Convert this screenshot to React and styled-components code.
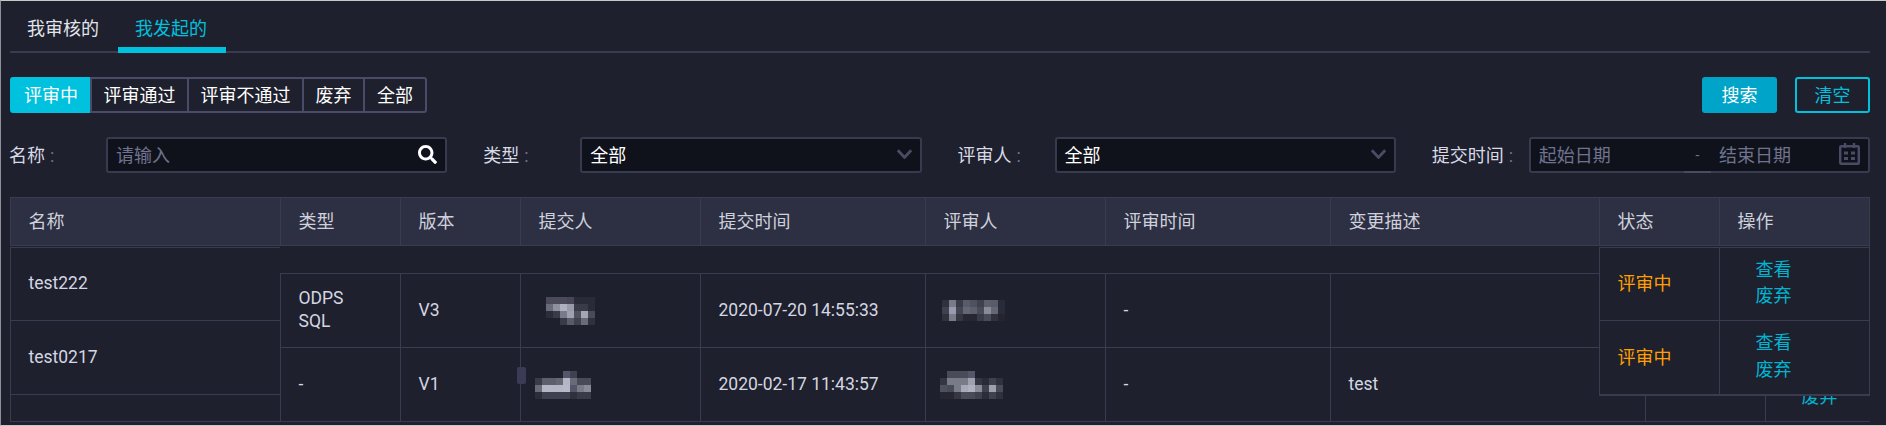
import React from "react";
import styled, { createGlobalStyle } from "styled-components";
import { FaSearch } from "react-icons/fa";

const GlobalStyle = createGlobalStyle`
  html, body {
    margin: 0;
    padding: 0;
    background: #1e202d;
  }
  * {
    box-sizing: border-box;
  }
`;

const COLUMNS = "270px 120px 120px 180px 225px 180px 225px 315px 120px 105px";

const BLOCK = 7;

// blurred user names, one colour per 7px block, null = nothing drawn
const submitterA = [
  ["#4a4a5a", "#4a4a5a", "#4a4a5a", "#464656", "#2a2b38", "#2a2b38", "#2a2b38"],
  ["#6a6b7a", "#8f909f", "#b0b1c0", "#9a9baa", "#3a3b48", "#3a3b48", "#2a2b38"],
  ["#2c2d3a", "#3a3b48", "#7a7b8a", "#a0a1b0", "#50515f", "#a5a6b5", "#4a4b58"],
  [null, null, "#3a3b48", "#5a5b68", "#40414e", "#6a6b78", "#30313c"],
];
const submitterB = [
  [null, null, null, null, "#55566a", "#3f4050", null, null],
  ["#3a3b48", "#5e5f6c", "#5e5f6c", "#666775", "#b5b6c5", "#6a6b78", "#4a4b58", "#4a4b58"],
  ["#6a6b78", "#b5b6c5", "#b5b6c5", "#b5b6c5", "#b8b9c8", "#55566a", "#7a7b88", "#8a8b98"],
  ["#2c2d3a", "#3f4050", "#3f4050", "#3f4050", "#3f4050", "#30313c", "#3a3b48", "#3a3b48"],
];
const reviewerA = [
  ["#30313c", "#7a7b88", "#3a3b48", "#5a5b68", "#50515f", "#40414e", "#5e5f6c", "#5a5b68", "#2a2b38"],
  ["#3f4050", "#9a9bae", "#444552", "#666775", "#5e5f6c", "#4a4b58", "#8a8b98", "#666775", "#2a2b38"],
  ["#30313c", "#7a7b88", "#353642", "#262733", "#262733", "#3a3b48", "#4a4b58", "#30313c", "#23242f"],
];
const reviewerB = [
  [null, "#4a4b58", "#4a4b58", "#4a4b58", "#55566a", null, null, null, null],
  ["#353642", "#7a7b88", "#7a7b88", "#7a7b88", "#a0a1b0", "#353642", "#2a2b38", "#3f4050", "#30313c"],
  ["#50515f", "#4a4b58", "#7a7b88", "#a8a9b8", "#b0b1c0", "#8a8b98", "#40414e", "#a0a1b0", "#4a4b58"],
  ["#262733", "#262733", "#353642", "#4a4b58", "#4a4b58", "#40414e", "#2c2d3a", "#3f4050", "#30313c"],
];

const Mosaic = ({ rows, shift }) => (
  <MosaicSvg
    $shift={shift}
    width={rows[0].length * BLOCK}
    height={rows.length * BLOCK}
    shapeRendering="crispEdges"
  >
    {rows.map((row, y) =>
      row.map((color, x) =>
        color ? (
          <rect key={`${x}-${y}`} x={x * BLOCK} y={y * BLOCK} width={BLOCK} height={BLOCK} fill={color} />
        ) : null
      )
    )}
  </MosaicSvg>
);

const Chevron = () => (
  <svg width="15" height="10" viewBox="0 0 15 10">
    <path d="M0.8 1.2 L7.5 8.4 L14.2 1.2" fill="none" stroke="#4a4c66" strokeWidth="2.8" />
  </svg>
);

const CalendarIcon = () => (
  <svg width="21" height="22" viewBox="0 0 21 22">
    <rect x="1.2" y="3.2" width="18.6" height="17.6" rx="1" fill="none" stroke="#4a4c66" strokeWidth="2.4" />
    <path d="M6 0 V5 M15 0 V5" stroke="#4a4c66" strokeWidth="2.4" />
    <path d="M5 10 H9 M12 10 H16 M5 15.5 H9 M12 15.5 H16" stroke="#4a4c66" strokeWidth="2.8" />
  </svg>
);

const Ops = () => (
  <OpsStack>
    <OpLink>查看</OpLink>
    <OpLink>废弃</OpLink>
  </OpsStack>
);

const App = () => {
  return (
    <Page>
      <GlobalStyle />
      <Tabs>
        <Tab>我审核的</Tab>
        <Tab $active>我发起的</Tab>
      </Tabs>

      <Toolbar>
        <StatusGroup>
          <StatusButton $active>评审中</StatusButton>
          <StatusButton>评审通过</StatusButton>
          <StatusButton>评审不通过</StatusButton>
          <StatusButton>废弃</StatusButton>
          <StatusButton>全部</StatusButton>
        </StatusGroup>
        <Actions>
          <SearchButton>搜索</SearchButton>
          <ClearButton>清空</ClearButton>
        </Actions>
      </Toolbar>

      <Filters>
        <Filter>
          <Label>名称<Colon>:</Colon></Label>
          <Field>
            <Placeholder>请输入</Placeholder>
            <FaSearch size={19} color="#ffffff" />
          </Field>
        </Filter>
        <Filter>
          <Label>类型<Colon>:</Colon></Label>
          <Field>
            <Value>全部</Value>
            <Chevron />
          </Field>
        </Filter>
        <Filter>
          <Label>评审人<Colon>:</Colon></Label>
          <Field>
            <Value>全部</Value>
            <Chevron />
          </Field>
        </Filter>
        <Filter>
          <Label>提交时间<Colon>:</Colon></Label>
          <RangeField>
            <RangeStart>
              <Placeholder>起始日期</Placeholder>
            </RangeStart>
            <RangeDash>-</RangeDash>
            <RangeEnd>
              <Placeholder>结束日期</Placeholder>
              <CalendarIcon />
            </RangeEnd>
          </RangeField>
        </Filter>
      </Filters>

      <TableWrap>
        <HeadRow $columns={COLUMNS}>
          <HeadCell>名称</HeadCell>
          <HeadCell>类型</HeadCell>
          <HeadCell>版本</HeadCell>
          <HeadCell>提交人</HeadCell>
          <HeadCell>提交时间</HeadCell>
          <HeadCell>评审人</HeadCell>
          <HeadCell>评审时间</HeadCell>
          <HeadCell>变更描述</HeadCell>
          <HeadCell>状态</HeadCell>
          <HeadCell>操作</HeadCell>
        </HeadRow>
        <SpacerRow />
        <BodyRow $columns={COLUMNS}>
          <Cell>test222</Cell>
          <Cell><TypeText>ODPS SQL</TypeText></Cell>
          <Cell>V3</Cell>
          <Cell><Mosaic rows={submitterA} shift={7} /></Cell>
          <Cell>2020-07-20 14:55:33</Cell>
          <Cell><Mosaic rows={reviewerA} shift={-2} /></Cell>
          <Cell>-</Cell>
          <Cell />
          <Cell><Status>评审中</Status></Cell>
          <Cell><Ops /></Cell>
        </BodyRow>
        <BodyRow $columns={COLUMNS}>
          <Cell>test0217</Cell>
          <Cell>-</Cell>
          <Cell>V1</Cell>
          <Cell>
            <ScrollThumb />
            <Mosaic rows={submitterB} shift={-4} />
          </Cell>
          <Cell>2020-02-17 11:43:57</Cell>
          <Cell><Mosaic rows={reviewerB} shift={-4} /></Cell>
          <Cell>-</Cell>
          <Cell>test</Cell>
          <Cell><Status>评审中</Status></Cell>
          <Cell><Ops /></Cell>
        </BodyRow>

        <FixedLeft>
          <HeadRow $columns="270px">
            <HeadCell>名称</HeadCell>
          </HeadRow>
          <FixedBody>
            <FixedRow $columns="270px"><Cell>test222</Cell></FixedRow>
            <FixedRow $columns="270px"><Cell>test0217</Cell></FixedRow>
            <LeftFiller />
          </FixedBody>
        </FixedLeft>

        <FixedRight>
          <HeadRow $columns="120px 150px">
            <HeadCell>状态</HeadCell>
            <HeadCell>操作</HeadCell>
          </HeadRow>
          <FixedBody>
            <FixedRow $columns="120px 150px">
              <Cell><Status>评审中</Status></Cell>
              <Cell><Ops /></Cell>
            </FixedRow>
            <FixedRow $columns="120px 150px">
              <Cell><Status>评审中</Status></Cell>
              <Cell><Ops /></Cell>
            </FixedRow>
          </FixedBody>
        </FixedRight>
      </TableWrap>
    </Page>
  );
};

export default App;

const Page = styled.div`
  width: 1886px;
  height: 426px;
  overflow: hidden;
  padding: 0 16px 0 9px;
  background: #1e202d;
  border-top: 1px solid #c8c8c8;
  border-left: 1px solid #8f909a;
  border-bottom: 1px solid #c8c8c8;
  color: #d8dae5;
  font-family: Roboto, "Noto Sans CJK SC", sans-serif;
  font-size: 17.5px;
`;

const Tabs = styled.div`
  display: flex;
  height: 52px;
  border-bottom: 2px solid #3a3b50;
`;

const Tab = styled.div`
  height: 52px;
  width: 108px;
  padding: 15px 2px 0 0;
  line-height: 26px;
  text-align: center;
  font-size: 18px;
  color: ${({ $active }) => ($active ? "#00c1de" : "#e2e4ec")};
  border-bottom: 6px solid ${({ $active }) => ($active ? "#00c1de" : "transparent")};
`;

const Toolbar = styled.div`
  display: flex;
  justify-content: space-between;
  margin-top: 24px;
`;

const StatusGroup = styled.div`
  display: flex;
  height: 36px;
`;

const StatusButton = styled.div`
  display: flex;
  align-items: center;
  padding: 0 11.5px 2px;
  margin-left: -2px;
  font-size: 18px;
  color: #ffffff;
  background: ${({ $active }) => ($active ? "#00c1de" : "transparent")};
  border: 2px solid ${({ $active }) => ($active ? "#00c1de" : "#4a4b68")};

  &:first-child {
    margin-left: 0;
    border-radius: 3px 0 0 3px;
    padding: 0 12px 2px;
  }
  &:last-child {
    border-radius: 0 3px 3px 0;
    padding: 0 12px 2px;
  }
`;

const Actions = styled.div`
  display: flex;
  gap: 18px;
`;

const SearchButton = styled.div`
  width: 75px;
  height: 36px;
  display: flex;
  align-items: center;
  justify-content: center;
  padding-bottom: 2px;
  font-size: 18px;
  color: #ffffff;
  background: #00a4c8;
  border-radius: 3px;
`;

const ClearButton = styled(SearchButton)`
  color: #00c1de;
  background: transparent;
  border: 2px solid #00c1de;
`;

const Filters = styled.div`
  display: grid;
  grid-template-columns: repeat(4, 1fr);
  column-gap: 37px;
  margin-top: 24px;
`;

const Filter = styled.div`
  display: flex;
  align-items: center;
`;

const Label = styled.div`
  width: 96px;
  flex-shrink: 0;
  margin-left: -1px;
  margin-right: 1px;
  padding-bottom: 2px;
  font-size: 18px;
  color: #d8dae5;
  white-space: nowrap;
`;

const Colon = styled.span`
  margin-left: 5px;
  color: #6f7390;
`;

const Field = styled.div`
  flex: 1;
  height: 36px;
  display: flex;
  align-items: center;
  justify-content: space-between;
  padding: 0 8px 2px 8px;
  background: #10121b;
  border: 2px solid #383a50;
  border-radius: 3px;
`;

const Placeholder = styled.span`
  font-size: 18px;
  color: #6f7390;
`;

const Value = styled.span`
  font-size: 18px;
  color: #ffffff;
`;

const RangeField = styled.div`
  flex: 1;
  height: 36px;
  display: flex;
  background: #10121b;
  border: 2px solid #383a50;
  border-radius: 3px;
`;

const RangeStart = styled.div`
  flex: 1;
  display: flex;
  align-items: center;
  padding: 0 0 2px 8px;
`;

const RangeDash = styled.div`
  width: 27px;
  display: flex;
  align-items: center;
  justify-content: center;
  font-size: 14px;
  color: #6f7390;
  margin-bottom: -2px;
  border-bottom: 2px solid #4a4c66;
`;

const RangeEnd = styled.div`
  width: 157px;
  display: flex;
  align-items: center;
  justify-content: space-between;
  padding: 0 8px 2px 8px;
`;

const TableWrap = styled.div`
  position: relative;
  margin-top: 24px;
  height: 225px;
  overflow: hidden;
  border-bottom: 1px solid #3a3b50;
`;

const HeadRow = styled.div`
  display: grid;
  grid-template-columns: ${({ $columns }) => $columns};
  height: 49px;
  background: #2d3042;
  border-top: 1px solid #3a3b50;
  border-bottom: 1px solid #3a3b50;
`;

const HeadCell = styled.div`
  display: flex;
  align-items: center;
  padding: 0 0 3px 17.5px;
  font-size: 18px;
  color: #cfd1dd;
  border-left: 1px solid #3a3b50;
`;

const SpacerRow = styled.div`
  height: 28px;
  border-bottom: 1px solid #3a3b50;
`;

const BodyRow = styled.div`
  display: grid;
  grid-template-columns: ${({ $columns }) => $columns};
  height: 74px;
  border-bottom: 1px solid #3a3b50;
`;

const Cell = styled.div`
  position: relative;
  display: flex;
  align-items: center;
  min-width: 0;
  padding: 0 0 2px 17.5px;
  color: #d4d6e2;
  border-left: 1px solid #3a3b50;
`;

const TypeText = styled.div`
  width: 60px;
  line-height: 23px;
`;

const MosaicSvg = styled.svg`
  display: block;
  margin-top: 2px;
  margin-left: ${({ $shift }) => $shift}px;
`;

const ScrollThumb = styled.div`
  position: absolute;
  left: -4px;
  top: 19px;
  width: 9px;
  height: 17px;
  background: #3a3b55;
  border-radius: 2px;
`;

const Status = styled.span`
  padding-bottom: 2px;
  font-size: 18px;
  color: #ff9f00;
`;

const OpsStack = styled.div`
  display: flex;
  flex-direction: column;
  padding-left: 18px;
  line-height: 26.5px;
`;

const OpLink = styled.span`
  font-size: 18px;
  color: #00b5d1;
`;

const FixedLeft = styled.div`
  position: absolute;
  left: 0;
  top: 0;
  bottom: 0;
  width: 270px;
  background: #1e202d;
`;

const FixedRight = styled.div`
  position: absolute;
  right: 0;
  top: 0;
  width: 271px;
  background: #1e202d;
  border-right: 1px solid #3a3b50;
  border-bottom: 1px solid #3a3b50;
`;

const FixedBody = styled.div`
  margin-top: 1px;
  border-top: 1px solid #3a3b50;
`;

const FixedRow = styled(BodyRow)`
  &:first-child {
    height: 73px;
  }
`;

const LeftFiller = styled.div`
  height: 27px;
  border-left: 1px solid #3a3b50;
`;
